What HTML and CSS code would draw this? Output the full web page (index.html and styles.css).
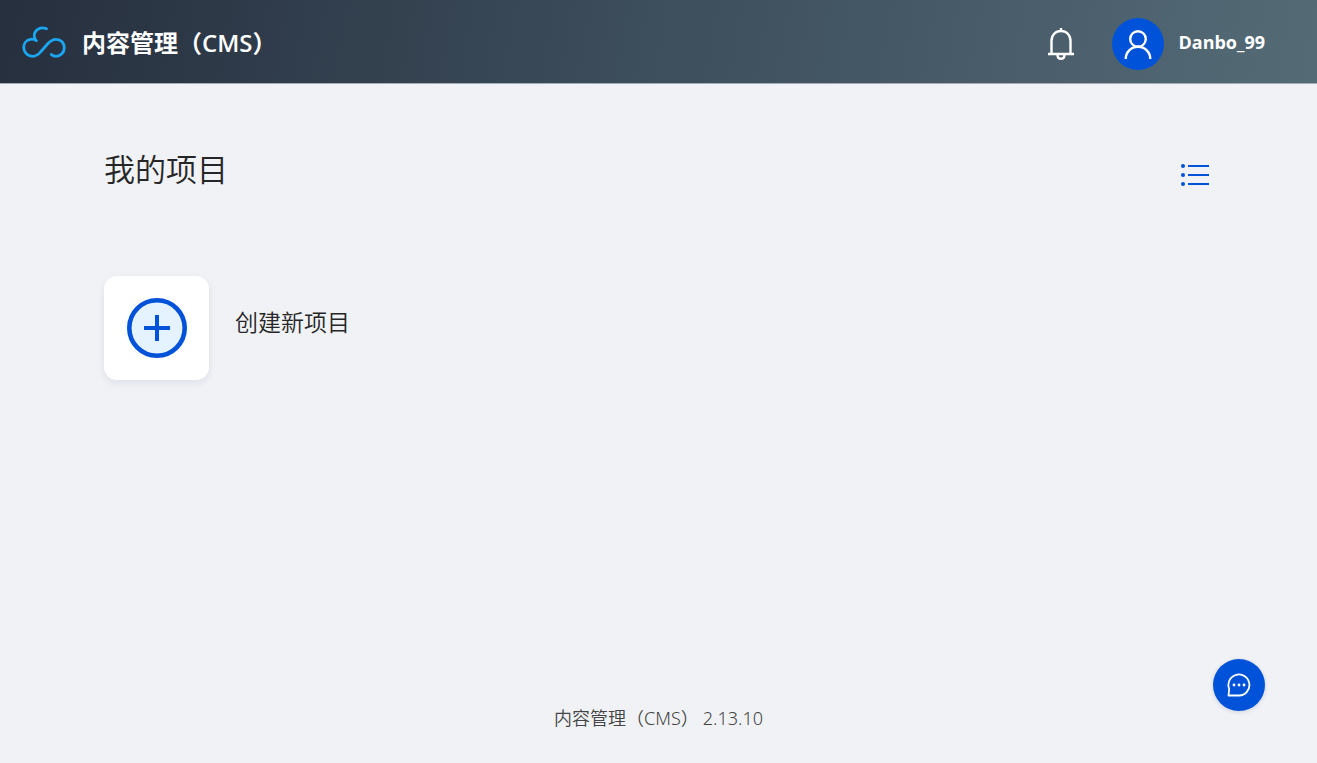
FILE: index.html
```html
<!DOCTYPE html>
<html lang="zh-CN">

<head>
    <meta charset="utf-8">
    <meta name="viewport" content="width=device-width, initial-scale=1.0">
    <title>内容管理（CMS）</title>
    <link rel="stylesheet" href="styles.css">
</head>

<body>

    <header class="header">
        <a class="brand" href="#">
            <svg class="logo" viewBox="0 0 44 32" fill="none" stroke="#1ba6f2" stroke-width="2.800" stroke-linecap="round" stroke-linejoin="round">
                <path d="M24.500 2.700C19 0.300 12.500 3.500 12.200 9.500C12.200 11.500 13 13.200 14.300 14.600C12.500 13.400 10.500 13 8.500 13.300C4.500 13.900 1.700 17.300 1.700 21.500C1.700 26.500 5.700 30.300 10.500 30.300C14 30.300 16.500 28.500 18.500 26L26 17.500C28.500 14.700 31 13.300 34 13.300C39 13.300 42.300 17.200 42.300 21.800C42.300 26.500 38.500 30.300 34 30.300C32 30.300 30.500 29.600 29.300 28.500" />
            </svg>
            <span>内容管理（CMS）</span>
        </a>
        <div class="tools">
            <button class="bell" aria-label="通知">
                <svg viewBox="0 0 26 32" fill="none" stroke="#fff" stroke-width="2.400">
                    <path d="M13 0V3M3.500 26V13C3.500 7 7.500 3 13 3S22.500 7 22.500 13V26M0 26H26M9.500 27C9.500 32 16.500 32 16.500 27" />
                </svg>
            </button>
            <a class="user" href="#">
                <span class="avatar">
                    <svg viewBox="0 0 28 30" fill="none" stroke="#fff" stroke-width="2.400">
                        <circle cx="14" cy="10" r="7.800" />
                        <path d="M1.700 30C1.700 23 7 17.800 14 17.800S26.300 23 26.300 30" />
                    </svg>
                </span>
                <span class="name">Danbo_99</span>
            </a>
        </div>
    </header>

    <main class="main">
        <div class="top">
            <h1>我的项目</h1>
            <button class="view" aria-label="列表视图">
                <svg viewBox="0 0 28 22" fill="none" stroke="#0052d9" stroke-width="2.200">
                    <path d="M7 2H28M7 11H28M7 20H28" />
                    <g fill="#0052d9" stroke="none">
                        <circle cx="2" cy="2" r="2" />
                        <circle cx="2" cy="11" r="2" />
                        <circle cx="2" cy="20" r="2" />
                    </g>
                </svg>
            </button>
        </div>

        <button class="create">
            <span class="card">
                <svg viewBox="0 0 60 60" stroke="#0052d9">
                    <circle cx="30" cy="30" r="27.700" fill="#e5f2ff" stroke-width="4.600" />
                    <path d="M17 30H43M30 17V43" stroke-width="4" />
                </svg>
            </span>
            <span class="create-text">创建新项目</span>
        </button>
    </main>

    <footer class="footer">
        <span>内容管理（CMS）</span>
        <span>2.13.10</span>
    </footer>

    <button class="chat" aria-label="反馈">
        <svg viewBox="0 0 24 24" fill="none" stroke="#fff" stroke-width="1.800">
            <path d="M1.500 22.500L2.200 16A10.500 10.500 0 1 1 12 22.500Z" stroke-linejoin="round" />
            <g fill="#fff" stroke="none">
                <circle cx="7" cy="12" r="1.400" />
                <circle cx="12" cy="12" r="1.400" />
                <circle cx="17" cy="12" r="1.400" />
            </g>
        </svg>
    </button>

</body>

</html>
```
FILE: styles.css
```css
* {
    box-sizing: border-box;
}

body {
    display: flex;
    flex-direction: column;
    min-height: 100vh;
    margin: 0;
    background-color: #f0f2f6;
    color: #262626;
    font-family: "Open Sans", "Noto Sans CJK SC", sans-serif;
}

button {
    padding: 0;
    border: 0;
    background: none;
    color: inherit;
    font: inherit;
    cursor: pointer;
}

a {
    color: inherit;
    text-decoration: none;
}

svg {
    display: block;
}

.header {
    display: flex;
    justify-content: space-between;
    align-items: center;
    height: 84px;
    padding: 0 52px 0 22px;
    border-bottom: 1px solid #a3adb5;
    background: linear-gradient(100deg, #262f3e, #3d4e5c 50%, #546b76);
    color: #fff;
}

.brand {
    display: flex;
    align-items: center;
    gap: 16px;
    font-size: 24px;
    font-weight: 600;
}

.logo {
    width: 44px;
    height: 32px;
}

.tools {
    display: flex;
    align-items: center;
    gap: 38px;
    padding-top: 4px;
}

.bell svg {
    width: 26px;
    height: 32px;
}

.user {
    display: flex;
    align-items: center;
    gap: 14px;
    font-size: 18px;
    font-weight: 700;
}

.name {
    padding-bottom: 4px;
}

.avatar {
    display: flex;
    justify-content: center;
    align-items: center;
    width: 52px;
    height: 52px;
    border-radius: 50%;
    background-color: #0052d9;
}

.avatar svg {
    width: 28px;
    height: 30px;
}

.main {
    flex: 1;
    padding: 60px 104px 0;
}

.top {
    display: flex;
    justify-content: space-between;
    align-items: flex-start;
    margin-bottom: 82px;
}

h1 {
    margin: 0;
    font-size: 31px;
    font-weight: 350;
    line-height: 50px;
}

.view {
    padding: 20px 4px 0;
}

.view svg {
    width: 28px;
    height: 22px;
}

.create {
    display: flex;
    gap: 26px;
    text-align: left;
}

.card {
    display: flex;
    justify-content: center;
    align-items: center;
    width: 105px;
    height: 104px;
    border-radius: 13px;
    background-color: #fff;
    box-shadow: 0 3px 8px rgba(0, 30, 80, 0.08);
}

.card svg {
    width: 60px;
    height: 60px;
}

.create-text {
    padding-top: 28px;
    font-size: 23px;
    font-weight: 350;
    line-height: 36px;
}

.footer {
    display: flex;
    justify-content: center;
    gap: 4px;
    padding-bottom: 31px;
    color: #444;
    font-family: "Noto Sans", "Noto Sans CJK SC", sans-serif;
    font-size: 18px;
    font-weight: 350;
    line-height: 28px;
}

.chat {
    display: flex;
    justify-content: center;
    align-items: center;
    position: fixed;
    right: 52px;
    bottom: 52px;
    width: 52px;
    height: 52px;
    border-radius: 50%;
    background-color: #0052d9;
    box-shadow: 0 1px 4px rgba(0, 30, 80, 0.15);
}

.chat svg {
    width: 24px;
    height: 24px;
}
```
